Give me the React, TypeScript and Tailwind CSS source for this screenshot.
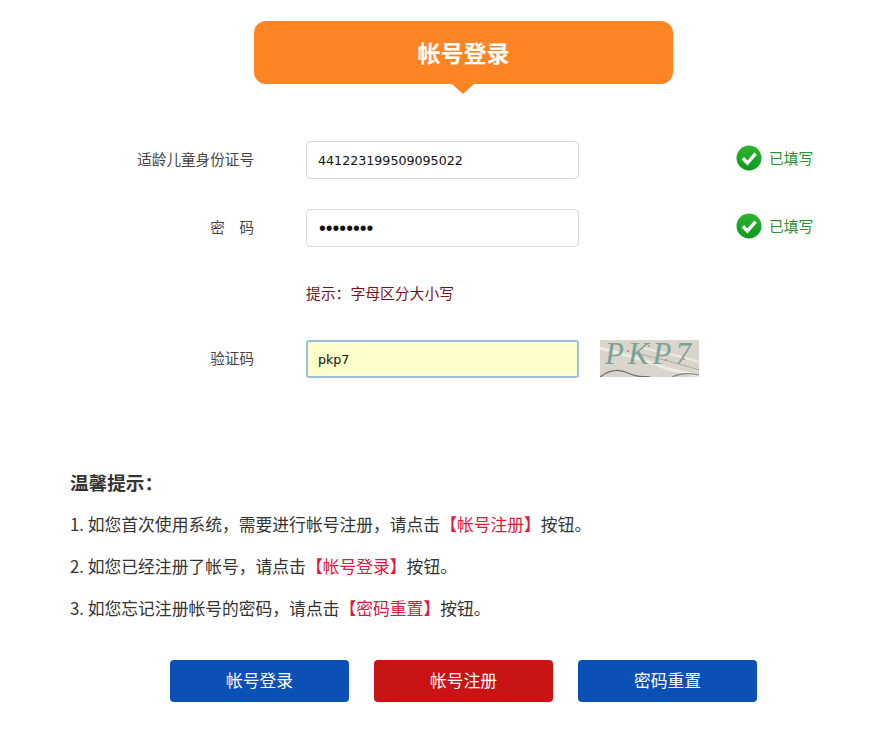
import React from "react";

const cjk = "font-['Microsoft_YaHei','Noto_Sans_CJK_SC','Noto_Sans',sans-serif]";

function Check() {
  return (
    <svg width="26" height="26" viewBox="0 0 26 26" className="shrink-0">
      <defs>
        <linearGradient id="g" x1="0" y1="0" x2="0" y2="1">
          <stop offset="0" stopColor="#2fb52f" />
          <stop offset="1" stopColor="#0d9a1e" />
        </linearGradient>
      </defs>
      <circle cx="13" cy="13" r="12.5" fill="url(#g)" />
      <path d="M6.8 13.2 L11.4 18 L19.6 8.6" fill="none" stroke="#fff" strokeWidth="3.4" />
    </svg>
  );
}

function Status() {
  return (
    <div className="ml-[157px] flex -translate-y-[2px] items-center gap-[7px]">
      <Check />
      <span className="text-[14.8px] text-[#2f8f2f]">已填写</span>
    </div>
  );
}

function Label({ children }: { children: React.ReactNode }) {
  return <label className="h-[38px] w-[254px] shrink-0 text-right text-[14.6px] leading-[36px] text-[#444]">{children}</label>;
}

function Field({ value, type = "text", focus = false }: { value: string; type?: string; focus?: boolean }) {
  if (type === "password") {
    return (
      <input
        readOnly
        type="password"
        value={value}
        className="ml-[52px] h-[38px] w-[273px] rounded-[4px] border border-[#dcdcdc] bg-white px-[12px] font-['Liberation_Sans',sans-serif] text-[19.4px] text-[#111] outline-none"
      />
    );
  }
  return (
    <input
      readOnly
      type={type}
      value={value}
      className={
        focus
          ? "ml-[52px] h-[38px] w-[273px] rounded-[3px] border-2 border-[#9dbde3] bg-[#ffffcc] px-[10px] font-['DejaVu_Sans',sans-serif] text-[12.65px] text-[#111] outline-none"
          : "ml-[52px] h-[38px] w-[273px] rounded-[4px] border border-[#dcdcdc] bg-white px-[11px] font-['DejaVu_Sans',sans-serif] text-[12.65px] text-[#111] outline-none"
      }
    />
  );
}

function Captcha() {
  return (
    <div className="ml-[21px] h-[37px] w-[99px] self-start overflow-hidden bg-[#d9d4cc]">
      <svg width="99" height="37" viewBox="0 0 99 37">
        <path d="M0 8 C20 14 40 18 60 26 S90 32 99 36" fill="none" stroke="#eeeae4" strokeWidth="3" />
        <path d="M40 14 C55 18 75 22 99 30" fill="none" stroke="#a9aaa2" strokeWidth="1" />
        <path d="M44 8 C60 12 80 16 99 22" fill="none" stroke="#eeeae4" strokeWidth="2" />
        <path d="M0 37 C8 31 18 28 28 33 S42 36 50 37" fill="none" stroke="#6f6f68" strokeWidth="1.3" />
        <path d="M72 37 C80 33 90 33 99 35" fill="none" stroke="#87877f" strokeWidth="1.2" />
        <text x="5" y="24" fontFamily="Liberation Serif, serif" fontStyle="italic" fontSize="31" letterSpacing="4" fill="#7ba397">
          PKP7
        </text>
        <circle cx="49" cy="6" r="0.8" fill="#c24a5a" />
        <circle cx="28" cy="11" r="0.8" fill="#7b3a6b" />
        <circle cx="66" cy="20" r="0.8" fill="#b44" />
        <circle cx="84" cy="19" r="0.8" fill="#b44" />
      </svg>
    </div>
  );
}

const Mark = ({ children }: { children: React.ReactNode }) => <span className="text-[#e3173e]">{children}</span>;

function Btn({ children, red = false }: { children: React.ReactNode; red?: boolean }) {
  return (
    <button
      className={
        red
          ? "h-[42px] w-[179px] rounded-[4px] bg-[#c81414] text-[16.8px] text-white"
          : "h-[42px] w-[179px] rounded-[4px] bg-[#0b50b4] text-[16.8px] text-white"
      }
    >
      {children}
    </button>
  );
}

export default function App() {
  return (
    <div className={`h-[730px] w-[871px] overflow-hidden bg-white pt-[21px] ${cjk}`}>
      <div className="ml-[254px] w-[419px]">
        <div className="flex h-[63px] items-center justify-center rounded-[12px] bg-[#ff8424] text-[23px] font-bold text-white">
          帐号登录
        </div>
        <div className="mx-auto h-0 w-0 -translate-x-px border-x-[11px] border-t-[10px] border-x-transparent border-t-[#ff8424]" />
      </div>

      <div className="mt-[47px] flex items-center">
        <Label>适龄儿童身份证号</Label>
        <Field value="441223199509095022" />
        <Status />
      </div>
      <div className="mt-[30px] flex items-center">
        <Label>密&emsp;码</Label>
        <Field value="aaaaaaaa" type="password" />
        <Status />
      </div>
      <p className="ml-[306px] mt-[36px] text-[14.8px] leading-[20px] text-[#7d1018]">提示：字母区分大小写</p>
      <div className="mt-[37px] flex items-center">
        <Label>验证码</Label>
        <Field value="pkp7" focus />
        <Captcha />
      </div>

      <div className="ml-[70px] mt-[83px] text-[16.8px] leading-[42px] text-[#333]">
        <h2 className="text-[18.6px] font-bold leading-[42px]">温馨提示：</h2>
        <p>
          1. 如您首次使用系统，需要进行帐号注册，请点击<Mark>【帐号注册】</Mark>按钮。
        </p>
        <p>
          2. 如您已经注册了帐号，请点击<Mark>【帐号登录】</Mark>按钮。
        </p>
        <p>
          3. 如您忘记注册帐号的密码，请点击<Mark>【密码重置】</Mark>按钮。
        </p>
      </div>

      <div className="ml-[170px] mt-[31px] flex gap-[25px]">
        <Btn>帐号登录</Btn>
        <Btn red>帐号注册</Btn>
        <Btn>密码重置</Btn>
      </div>
    </div>
  );
}
